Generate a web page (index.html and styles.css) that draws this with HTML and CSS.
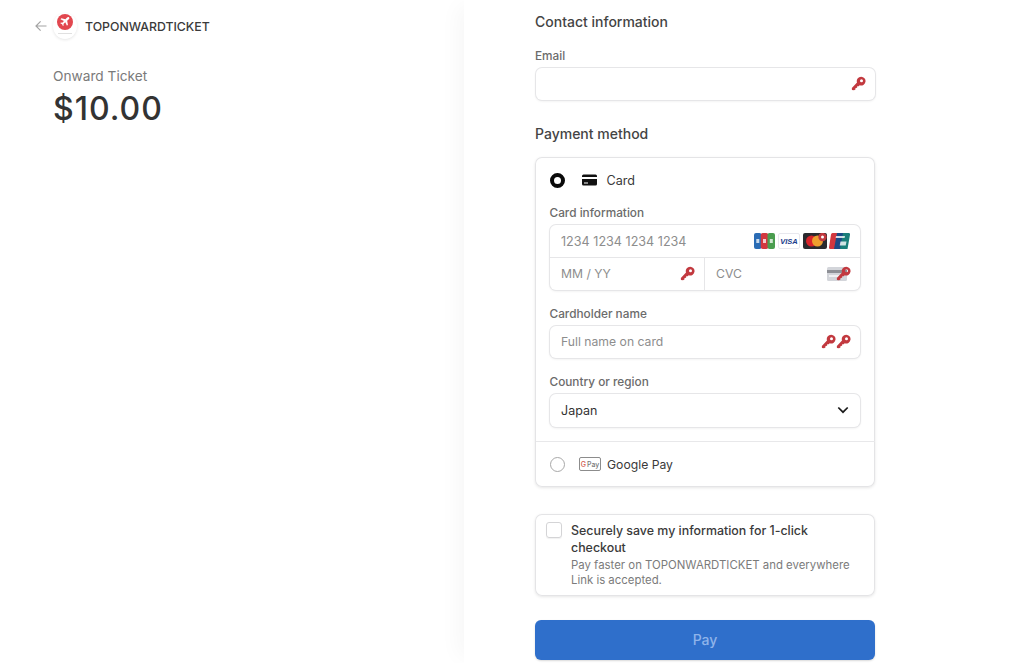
FILE: index.html
```html
<!DOCTYPE html>
<html lang="en">
<head>
<meta charset="utf-8">
<title>Checkout</title>
<link rel="stylesheet" href="styles.css">
</head>
<body>
<svg class="defs" width="0" height="0" aria-hidden="true">
  <symbol id="key" viewBox="0 0 16 16">
    <path fill-rule="evenodd" d="M10.800.8a4.700 4.700 0 1 1-1.500 9.150L8.200 11l-1.600-.1-.1 1.700-1.700.1-.1 1.700-1.500.9-2.200-.5-.1-2.100L6.400 7a4.700 4.700 0 0 1 4.400-6.200zm.4 2.700a1.600 1.600 0 1 0 0 3.200 1.600 1.600 0 0 0 0-3.200z" fill="#c2393f"/>
  </symbol>
</svg>
<main class="page">
  <section class="summary">
    <header class="brand">
      <svg class="back" width="12" height="12" viewBox="0 0 12 12"><path d="M11.500 6H1.200M5.600 1.400 1 6l4.600 4.600" fill="none" stroke="#a3a3a3" stroke-width="1.200"/></svg>
      <span class="logo">
        <svg width="16" height="16" viewBox="0 0 18 18"><circle cx="9" cy="9" r="9" fill="#e2474f"/><path d="M13.600 3.800c.6.6.3 1.400-.3 2L11.400 7.600l.9 4.600-1.100 1-1.900-3.800-2 1.800.2 1.600-.8.7-1-2-2-1 .7-.8 1.600.2 1.800-2L3.900 6l1-1.100 4.600.9 1.800-1.900c.7-.6 1.600-.8 2.300-.1z" fill="#fff"/></svg>
        <span class="logo-line"></span>
      </span>
      <span class="brand-name">TOPONWARDTICKET</span>
    </header>
    <div class="product">
      <div class="product-name">Onward Ticket</div>
      <div class="price">$10.00</div>
    </div>
  </section>

  <section class="form">
    <h2 class="title first">Contact information</h2>
    <label class="label email-label">Email</label>
    <div class="input solo">
      <span class="spacer"></span>
      <svg class="key"><use href="#key"/></svg>
    </div>

    <h2 class="title method">Payment method</h2>
    <div class="methods">
      <div class="card-pane">
        <div class="method-row">
          <span class="radio on"></span>
          <svg class="card-ico" width="15" height="12" viewBox="0 0 15 12"><path d="M1.500.5h12A1.500 1.500 0 0 1 15 2v1H0V2A1.500 1.500 0 0 1 1.500.5zM0 5h15v5a1.500 1.500 0 0 1-1.500 1.500h-12A1.500 1.500 0 0 1 0 10zm2 3.600v1h4v-1z" fill="#111"/></svg>
          <span class="method-name">Card</span>
        </div>
        <label class="label card-label">Card information</label>
        <div class="group">
          <div class="cell top">
            <span class="ph digits">1234 1234 1234 1234</span>
            <span class="brands">
              <svg width="21" height="16" viewBox="0 0 21 16"><rect width="7.500" height="16" rx="2" fill="#2a6cb5"/><rect x="6.750" width="7.500" height="16" rx="2" fill="#d2373f"/><rect x="13.500" width="7.500" height="16" rx="2" fill="#4a9d4f"/><path d="M2.300 6h3v4h-3zM9 6h3v4H9zM15.800 6h3v4h-3z" fill="#fff" opacity=".75"/></svg>
              <svg width="22" height="16" viewBox="0 0 22 16"><rect x=".5" y=".5" width="21" height="15" rx="1.500" fill="#fff" stroke="#e8e8ee"/><text x="11" y="10.800" class="visa" text-anchor="middle">VISA</text></svg>
              <svg width="24" height="16" viewBox="0 0 24 16"><rect width="24" height="16" rx="2" fill="#2a2a2e"/><circle cx="8.500" cy="8" r="5.500" fill="#d8232a"/><circle cx="14.500" cy="8" r="5.500" fill="#ee9f2d"/><circle cx="19.500" cy="4" r="4.200" fill="#c2393f"/><circle cx="19.500" cy="4" r="1.500" fill="#fff"/></svg>
              <svg width="21" height="16" viewBox="0 0 21 16"><path d="M3.500 0h6L7 16H1.500A1.500 1.500 0 0 1 0 14.200L2 1.500A1.800 1.800 0 0 1 3.500 0z" fill="#d2373f"/><path d="M8 0h7l-3 16H5z" fill="#1b4a86"/><path d="M14 0h5.500A1.500 1.500 0 0 1 21 1.800L18.500 16H11z" fill="#1a7f7a"/><path d="M7 3h9l-.4 2H6.600zM11.500 8.500h6l-.8 4h-6z" fill="#fff" opacity=".8"/></svg>
            </span>
          </div>
          <div class="split">
            <div class="cell half left">
              <span class="ph">MM / YY</span>
              <svg class="key"><use href="#key"/></svg>
            </div>
            <div class="cell half">
              <span class="ph">CVC</span>
              <span class="cvc">
                <svg width="22" height="15" viewBox="0 0 22 15"><rect y="1" width="20" height="14" rx="1.500" fill="#d3d5da"/><rect y="4" width="20" height="3" fill="#8e9096"/><rect x="2" y="9" width="10" height="2" fill="#f1f1f3"/></svg>
                <svg class="key over"><use href="#key"/></svg>
              </span>
            </div>
          </div>
        </div>
        <label class="label holder-label">Cardholder name</label>
        <div class="input">
          <span class="ph">Full name on card</span>
          <span class="keys">
            <svg class="key"><use href="#key"/></svg>
            <svg class="key"><use href="#key"/></svg>
          </span>
        </div>
        <label class="label country-label">Country or region</label>
        <div class="input select">
          <span class="value">Japan</span>
          <svg width="12" height="8" viewBox="0 0 12 8"><path d="M1.300 1.500 6 6.200l4.700-4.700" fill="none" stroke="#1a1a1a" stroke-width="1.700"/></svg>
        </div>
      </div>
      <div class="method-row gpay-row">
        <span class="radio"></span>
        <span class="gpay"><span class="g">G</span> Pay</span>
        <span class="method-name">Google Pay</span>
      </div>
    </div>

    <div class="save">
      <span class="check"></span>
      <div class="save-text">
        <div class="save-title">Securely save my information for 1-click checkout</div>
        <div class="save-sub">Pay faster on TOPONWARDTICKET and everywhere Link is accepted.</div>
      </div>
    </div>

    <button class="pay" type="button">Pay</button>
  </section>
</main>
</body>
</html>
```
FILE: styles.css
```css
* { box-sizing: border-box; }
html, body { margin: 0; height: 100%; overflow: hidden; background: #fff; }
body { font-family: Inter, "Liberation Sans", sans-serif; color: #303030; }
.defs { position: absolute; }
.page { display: flex; height: 663px; }

/* left */
.summary { width: 464px; flex: none; padding: 13px 0 0 35px; }
.brand { display: flex; align-items: center; height: 26px; }
.back { margin-right: 6px; }
.logo { width: 24px; height: 26px; border-radius: 50%; background: #fff; box-shadow: 0 1px 3px rgba(0,0,0,.1); display: flex; flex-direction: column; align-items: center; padding-top: 1px; }
.logo svg { display: block; }
.logo-line { width: 14px; height: 1px; margin-top: 3px; background: #e0e0e0; }
.brand-name { margin-left: 8px; font-size: 12.300px; font-weight: 500; color: #3a3a3a; }
.product { padding: 27px 0 0 18px; }
.product-name { font-size: 13.700px; font-weight: 400; color: #7a7a7a; line-height: 20px; }
.price { font-size: 32px; font-weight: 500; color: #333; line-height: 38px; margin-top: 4px; letter-spacing: 1px; }

/* right */
.form { flex: 1; padding: 0 0 0 71px; box-shadow: -12px 0 20px -6px rgba(0,0,0,.035); }
.title { margin: 0; font-size: 14px; font-weight: 500; line-height: 20px; color: #444; }
.title.first { padding-top: 12px; height: 32px; }
.title.method { margin-top: 24px; }
.label { display: block; font-size: 11.800px; font-weight: 500; line-height: 16px; color: #6b6b6b; }
.email-label { margin-top: 16px; }
.input, .group { background: #fff; border-radius: 6px; box-shadow: 0 0 0 1px #e6e6e8, 0 1px 3px rgba(0,0,0,.09); }
.input { height: 32px; display: flex; align-items: center; justify-content: space-between; padding: 0 9px 0 11px; margin: 0 .5px; }
.solo { width: 339px; margin-top: 3.500px; }
.spacer { flex: 1; }
.ph { font-size: 12.200px; color: #8d8d8d; }
.ph.digits { font-size: 12.600px; }
.value { font-size: 12.500px; font-weight: 400; color: #333; }
.key { width: 15px; height: 15px; display: block; }
.keys { display: flex; gap: 0; }

.methods { width: 340px; margin-top: 13px; height: 330px; border-radius: 7px; box-shadow: 0 0 0 1px #e4e4e6 inset, 0 1px 3px rgba(0,0,0,.1); }
.card-pane { height: 285px; padding: 0 14px; border-bottom: 1px solid #e8e8ea; margin: 0 .5px; }
.method-row { display: flex; align-items: center; height: 47px; }
.radio { width: 15px; height: 15px; border-radius: 50%; border: 1px solid #a8a8a8; flex: none; }
.radio.on { border: 4.500px solid #0a0a0a; background: #fff; }
.card-ico { margin-left: 17px; }
.method-name { font-size: 12.600px; font-weight: 400; color: #3a3a3a; margin-left: 10px; }
.card-label { margin-top: 1px; }
.group { margin: 4px .5px 0; height: 65px; }
.cell { display: flex; align-items: center; justify-content: space-between; padding: 0 9px 0 11px; height: 33px; }
.top { border-bottom: 1px solid #e6e6e8; padding-top: 1px; }
.split { display: flex; margin-top: -1px; }
.half { width: 50%; height: 33px; }
.left { border-right: 1px solid #e6e6e8; }
.brands { display: flex; align-items: center; gap: 3px; margin-right: 1px; }
.brands svg { display: block; }
.brands svg:last-child { margin-left: -1px; }
.visa { font: italic 700 7.500px "Liberation Sans", sans-serif; fill: #1a3a8a; }
.cvc { position: relative; display: block; width: 24px; height: 15px; }
.cvc > svg:first-child { display: block; }
.key.over { position: absolute; right: 0; top: 0; }
.holder-label { margin-top: 16px; }
.holder-label + .input { margin-top: 4px; }
.country-label { margin-top: 16px; }
.country-label + .input { margin-top: 4px; height: 33px; }
.select { padding-right: 11px; }
.gpay-row { height: 45px; padding: 0 15px; }
.gpay { margin-left: 14px; width: 22px; height: 14px; border: 1px solid #8c8c8c; border-radius: 2px; font-size: 7px; font-weight: 500; color: #777; display: flex; align-items: center; justify-content: center; gap: 1px; }
.gpay .g { color: #d2574a; }
.gpay + .method-name { margin-left: 6px; font-size: 12.200px; }

.save { width: 340px; height: 82px; margin-top: 27px; border-radius: 7px; box-shadow: 0 0 0 1px #e4e4e6 inset, 0 1px 3px rgba(0,0,0,.1); padding: 8px 10px 0 11px; display: flex; }
.check { width: 16px; height: 16px; border-radius: 3px; border: 1px solid #d4d4d6; box-shadow: 0 1px 1px rgba(0,0,0,.06); flex: none; }
.save-text { margin-left: 9px; width: 290px; }
.save-title { font-size: 12.400px; font-weight: 500; line-height: 17px; color: #3a3a3a; width: 250px; }
.save-sub { font-size: 11.400px; line-height: 15.500px; color: #7b7b7b; margin-top: 2px; }
.pay { display: block; width: 340px; height: 40px; margin-top: 24px; border: 0; border-radius: 6px; background: #2f6fcb; color: #8fb4ea; font: 500 14px Inter, "Liberation Sans", sans-serif; box-shadow: 0 1px 2px rgba(0,0,0,.15); }
```
